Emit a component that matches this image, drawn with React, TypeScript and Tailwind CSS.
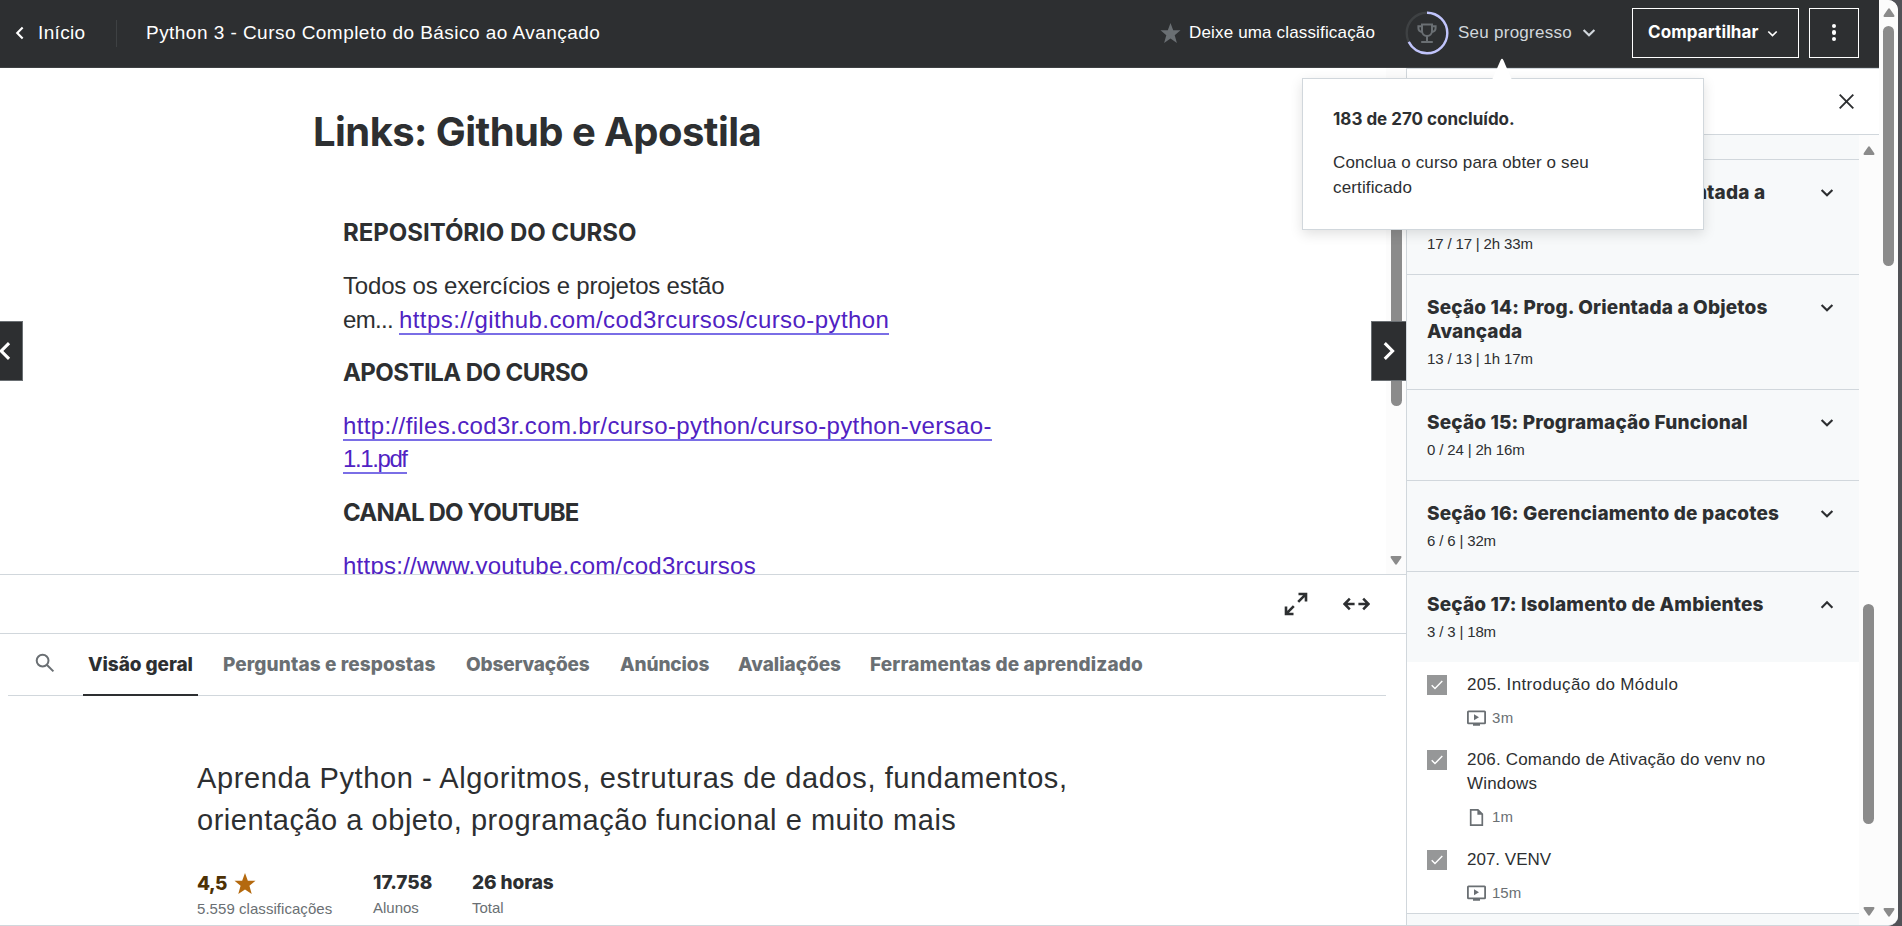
function Chevron({ className, dir = "down" }: { className: string; dir?: "down" | "up" | "left" | "right" }) {
  const paths = {
    down: "M1.2 1.7 6 6.5l4.8-4.8",
    up: "M1.2 6.8 6 2l4.8 4.8",
    left: "M6.8 1.2 2 6l4.8 4.8",
    right: "M1.7 1.2 6.5 6l-4.8 4.8",
  };
  const box = dir === "left" || dir === "right" ? "0 0 8 12" : "0 0 12 8";
  return (
    <svg viewBox={box} className={className} fill="none" stroke="currentColor" strokeWidth="1.9">
      <path d={paths[dir]} />
    </svg>
  );
}

function Star({ className }: { className: string }) {
  return (
    <svg viewBox="0 0 20 20" className={className} fill="currentColor">
      <path d="M10 0l2.7 7.3H20l-5.8 4.9L16.4 20 10 15.6 3.6 20l2.2-7.8L0 7.3h7.3z" />
    </svg>
  );
}

function ArrowTip({ up = false }: { up?: boolean }) {
  return (
    <svg viewBox="0 0 12 9" className="h-[9px] w-3 shrink-0" fill="#8b8b8b">
      <path d={up ? "M6 0.3Q6.6.3 7 1l4.3 6.2Q12 9 10.6 9H1.4Q0 9 .7 7.2L5 1Q5.4.3 6 .3z" : "M6 8.7Q6.6 8.7 7 8l4.3-6.2Q12 0 10.6 0H1.4Q0 0 .7 1.8L5 8Q5.4 8.7 6 8.7z"} />
    </svg>
  );
}

function Header() {
  return (
    <header className="flex h-[68px] shrink-0 items-center border-b border-[#3e4143] bg-[#2d2f31] text-white">
      <Chevron dir="left" className="mb-[2px] ml-[15px] h-[14px] w-[9px]" />
      <span className="ml-[14px] w-[78px] text-[19px] tracking-[0.35px]">Início</span>
      <span className="h-[27px] w-px bg-[#3e4143]" />
      <span className="ml-[29px] text-[19px] tracking-[0.46px]">Python 3 - Curso Completo do Básico ao Avançado</span>
      <div className="ml-auto flex h-full items-center pb-[2px]">
        <Star className="h-5 w-[21px] text-[#6a6f73]" />
        <span className="ml-2 w-[216px] text-[17px] tracking-[0.16px]">Deixe uma classificação</span>
        <svg viewBox="0 0 44 44" className="h-11 w-11" fill="none">
          <circle cx="22" cy="22" r="20.3" stroke="#3e4143" strokeWidth="2.4" />
          <circle cx="22" cy="22" r="20.3" stroke="#c0c4fc" strokeWidth="2.4" pathLength="270" strokeDasharray="183 270" transform="rotate(-90 22 22)" />
          <g stroke="#6a6f73" strokeWidth="2">
            <path d="M17 13.5h10v6.4a5 5 0 0 1-10 0z" />
            <path d="M17 15.3h-3.6v1.6c0 2.2 1.4 3.8 4.2 4M27 15.3h3.6v1.6c0 2.2-1.4 3.8-4.2 4M22 24.5v6.3M16.2 31h11.6" />
          </g>
        </svg>
        <span className="ml-[9px] w-[124px] text-[17px] tracking-[0.26px] text-[#d1d7dc]">Seu progresso</span>
        <Chevron className="h-[9px] w-[14px] text-[#d1d7dc]" />
        <button className="ml-[36px] flex h-[50px] w-[167px] items-center border border-white pl-[15px] font-['Inter'] text-[17px] font-bold tracking-[0.1px]">
          <span className="w-[119px] text-left">Compartilhar</span>
          <Chevron className="mt-[2px] h-[7px] w-[11px]" />
        </button>
        <button className="mr-5 ml-[10px] flex h-[50px] w-[50px] flex-col items-center justify-center gap-[2px] border border-white">
          <i className="size-[4.6px] rounded-full bg-white" />
          <i className="size-[4.6px] rounded-full bg-white" />
          <i className="size-[4.6px] rounded-full bg-white" />
        </button>
      </div>
    </header>
  );
}

function Tooltip() {
  return (
    <div className="absolute top-[78px] left-[1302px] h-[152px] w-[402px] border border-[#d1d7dc] bg-white pt-[28px] pl-[30px] shadow-[0_4px_12px_rgba(0,0,0,0.12)]">
      <svg viewBox="0 0 20 22" className="absolute top-[-21px] left-[189px] h-[22px] w-5" fill="white">
        <path d="M0 22 8.6 2.2Q10-.5 11.4 2.2L20 22z" />
      </svg>
      <p className="font-['Inter'] text-[17px] leading-6 font-bold">183 de 270 concluído.</p>
      <p className="mt-[19px] w-[280px] text-[17px] leading-[25px] tracking-[0.14px]">Conclua o curso para obter o seu certificado</p>
    </div>
  );
}

function Link({ children, className }: { children: string; className: string }) {
  return <a className={`border-b-2 border-[#7a6ee6] text-[#5022c3] ${className}`}>{children}</a>;
}

function Heading({ children, className }: { children: string; className: string }) {
  return <h2 className={`mb-5 font-['Inter'] font-bold ${className}`}>{children}</h2>;
}

function Article() {
  return (
    <div className="relative flex h-[506px] overflow-hidden">
      <article className="flex-1 pl-[343px] text-[24px] leading-[33.3px]">
        <h1 className="mt-[40px] mb-[60px] -ml-[30px] font-['Inter'] text-[40px] leading-[48px] font-bold tracking-[-0.57px]">Links: Github e Apostila</h1>
        <Heading className="tracking-[-0.03px]">REPOSITÓRIO DO CURSO</Heading>
        <p className="mb-5">
          <span className="tracking-[-0.19px]">Todos os exercícios e projetos estão</span>
          <br />
          <span className="tracking-[-0.67px]">em... </span>
          <Link className="tracking-[0.42px]">https://github.com/cod3rcursos/curso-python</Link>
        </p>
        <Heading className="tracking-[-0.55px]">APOSTILA DO CURSO</Heading>
        <p className="mb-5">
          <Link className="tracking-[0.37px]">http://files.cod3r.com.br/curso-python/curso-python-versao-</Link>
          <br />
          <Link className="tracking-[-1.4px]">1.1.pdf</Link>
        </p>
        <Heading className="tracking-[-0.82px]">CANAL DO YOUTUBE</Heading>
        <p>
          <Link className="tracking-[0.25px]">https://www.youtube.com/cod3rcursos</Link>
        </p>
      </article>
      <div className="flex w-5 flex-col items-center justify-between bg-[#fcfcfc] pb-[9px]">
        <div className="mt-[30px] h-[308px] w-[11px] rounded-full bg-[#8b8b8b]" />
        <ArrowTip />
      </div>
      <button className="absolute top-[253px] left-0 flex h-[60px] w-[23px] items-center border border-l-0 border-[#6a6f73] bg-[#2d2f31] text-white">
        <Chevron dir="left" className="-ml-[2px] h-5 w-[13px]" />
      </button>
      <button className="absolute top-[253px] right-0 flex h-[60px] w-[35px] items-center border border-r-0 border-[#6a6f73] bg-[#2d2f31] pl-[10px] text-white">
        <Chevron dir="right" className="h-5 w-[13px]" />
      </button>
    </div>
  );
}

function ControlBar() {
  return (
    <div className="flex h-[60px] shrink-0 items-center justify-end gap-[35px] border-y border-[#d1d7dc] pr-[36px] text-[#2d2f31]">
      <svg viewBox="0 0 24 24" className="h-6 w-6" fill="none" stroke="currentColor" strokeWidth="2.6">
        <path d="M14.5 2h7.5v7.5M21.4 2.6l-7.2 7.2M2 14.5V22h7.5M2.6 21.4l7.2-7.2" />
      </svg>
      <svg viewBox="0 0 27 14" className="h-[14px] w-[27px]" fill="none" stroke="currentColor" strokeWidth="2.5">
        <path d="M6.8 1.7 1.6 7l5.2 5.3M2 7h9.6M20.2 1.7 25.4 7l-5.2 5.3M25 7h-9.6" />
      </svg>
    </div>
  );
}

function Tabs() {
  const tab = "flex h-full items-center pt-px";
  return (
    <nav className="mr-5 ml-2 flex h-[62px] items-stretch border-b border-[#d1d7dc] font-['Inter'] text-[19px] font-extrabold whitespace-nowrap text-[#6a6f73]">
      <svg viewBox="0 0 20 20" className="mt-[19px] ml-[27px] h-5 w-5" fill="none" stroke="currentColor" strokeWidth="2">
        <circle cx="7.6" cy="7.6" r="5.9" />
        <path d="m12 12 6.4 6.4" />
      </svg>
      <span className="-mb-px ml-[28px] flex w-[115px] items-center border-b-2 border-[#2d2f31] pt-[2px] pl-[5px] tracking-[-0.08px] text-[#2d2f31]">Visão geral</span>
      <span className={`${tab} ml-[25px] w-[243px] tracking-[0.1px]`}>Perguntas e respostas</span>
      <span className={`${tab} w-[154px] tracking-[-0.17px]`}>Observações</span>
      <span className={`${tab} w-[118px] tracking-[-0.12px]`}>Anúncios</span>
      <span className={`${tab} w-[132px] tracking-[-0.04px]`}>Avaliações</span>
      <span className={`${tab} tracking-[0.15px]`}>Ferramentas de aprendizado</span>
    </nav>
  );
}

function Overview() {
  return (
    <section className="pt-[61px] pl-[197px]">
      <p className="text-[29px] leading-[42px]">
        <span className="tracking-[0.6px]">Aprenda Python - Algoritmos, estruturas de dados, fundamentos,</span>
        <br />
        <span className="tracking-[0.53px]">orientação a objeto, programação funcional e muito mais</span>
      </p>
      <div className="mt-[30px] flex">
        <div className="w-[176px]">
          <div className="flex h-6 items-center gap-[7px] font-['Inter'] text-[19px] font-extrabold tracking-[-0.5px] text-[#4d3105]">
            <span className="mt-[2px]">4,5</span>
            <Star className="h-[21px] w-[22px] text-[#b4690e]" />
          </div>
          <div className="mt-[3px] text-[15px] leading-[21px] tracking-[0.05px] text-[#6a6f73]">5.559 classificações</div>
        </div>
        <div className="w-[99px]">
          <div className="font-['Inter'] text-[19px] leading-6 font-extrabold">17.758</div>
          <div className="mt-[3px] text-[15px] leading-5 text-[#6a6f73]">Alunos</div>
        </div>
        <div>
          <div className="font-['Inter'] text-[19px] leading-6 font-extrabold tracking-[-0.1px]">26 horas</div>
          <div className="mt-[3px] text-[15px] leading-5 text-[#6a6f73]">Total</div>
        </div>
      </div>
    </section>
  );
}

function Section({ title, info, open = false }: { title: string; info: string; open?: boolean }) {
  return (
    <div className="flex shrink-0 justify-between border-t border-[#d1d7dc] bg-[#f7f9fa] pt-[21px] pr-[25px] pb-5 pl-5">
      <div>
        <h3 className="w-[365px] font-['Inter'] text-[19px] leading-6 font-extrabold tracking-[0.16px]">{title}</h3>
        <p className="mt-[5px] text-[15px] leading-5 tracking-[-0.15px]">{info}</p>
      </div>
      <Chevron dir={open ? "up" : "down"} className="mt-[7px] h-[9px] w-[14px]" />
    </div>
  );
}

function Lesson({ title, time, doc = false, className }: { title: string; time: string; doc?: boolean; className: string }) {
  return (
    <div className={`flex shrink-0 pl-5 ${className}`}>
      <div className="mt-[2px] flex size-5 items-center justify-center bg-[#969798]">
        <svg viewBox="0 0 12 10" className="h-[10px] w-3" fill="none" stroke="white" strokeWidth="1.4">
          <path d="M.7 5.2 4 8.6 11.3 1" />
        </svg>
      </div>
      <div className="ml-5">
        <div className="w-[320px] text-[17px] leading-6">{title}</div>
        <div className="mt-[11px] flex h-5 items-center text-[15px] text-[#6a6f73]">
          {doc ? (
            <svg viewBox="0 0 19 19" className="h-[19px] w-[19px]" fill="none" stroke="currentColor" strokeWidth="1.7">
              <path d="M3.7 1.8h7.2l4.4 4.4v11H3.7z" />
              <path d="M10.4 1.8v5h5z" fill="currentColor" stroke="none" />
            </svg>
          ) : (
            <svg viewBox="0 0 19 16" className="h-4 w-[19px]" fill="none" stroke="currentColor" strokeWidth="1.8">
              <rect x=".9" y="1.3" width="17.2" height="12" rx=".6" />
              <path d="M7 4.3v6l5-3zM6 13.8h7v2H6z" fill="currentColor" stroke="none" />
            </svg>
          )}
          <span className="ml-[6px]">{time}</span>
        </div>
      </div>
    </div>
  );
}

function Sidebar() {
  return (
    <aside className="flex w-[473px] shrink-0 flex-col border-t border-l border-[#d1d7dc]">
      <div className="flex h-[66px] shrink-0 items-center justify-end border-b border-[#d1d7dc] pr-[25px]">
        <svg viewBox="0 0 15 15" className="h-[15px] w-[15px]" fill="none" stroke="currentColor" strokeWidth="1.9">
          <path d="m.7.7 13.6 13.6M14.3.7.7 14.3" />
        </svg>
      </div>
      <div className="flex min-h-0 flex-1">
        <div className="flex w-[452px] flex-col overflow-hidden">
          <div className="h-6 shrink-0 bg-[#f7f9fa]" />
          <Section title="Seção 13: Programação Orientada a Objetos" info="17 / 17 | 2h 33m" />
          <Section title="Seção 14: Prog. Orientada a Objetos Avançada" info="13 / 13 | 1h 17m" />
          <Section title="Seção 15: Programação Funcional" info="0 / 24 | 2h 16m" />
          <Section title="Seção 16: Gerenciamento de pacotes" info="6 / 6 | 32m" />
          <Section title="Seção 17: Isolamento de Ambientes" info="3 / 3 | 18m" open />
          <Lesson className="h-[76px] pt-[11px] tracking-[0.36px]" title="205. Introdução do Módulo" time="3m" />
          <Lesson className="h-[100px] pt-[10px] tracking-[0.18px]" title="206. Comando de Ativação do venv no Windows" time="1m" doc />
          <Lesson className="h-[75px] pt-[10px]" title="207. VENV" time="15m" />
          <div className="flex-1 border-t border-[#d1d7dc] bg-[#f7f9fa]" />
        </div>
        <div className="flex flex-1 flex-col items-center bg-[#fcfcfc] pt-[11px] pr-px pb-[9px]">
          <ArrowTip up />
          <div className="mt-[449px] mb-auto h-[220px] w-[11px] rounded-full bg-[#8b8b8b]" />
          <ArrowTip />
        </div>
      </div>
    </aside>
  );
}

export default function App() {
  return (
    <div className="h-[926px] w-[1902px] overflow-hidden bg-[#515257] pr-1 font-['Liberation_Sans',sans-serif] text-[#2d2f31]">
      <div className="relative flex h-full overflow-hidden rounded-r-[10px] border-b border-[#d1d7dc] bg-white">
        <div className="flex w-[1879px] shrink-0 flex-col">
          <Header />
          <div className="flex min-h-0 flex-1">
            <main className="flex min-w-0 flex-1 flex-col">
              <Article />
              <ControlBar />
              <Tabs />
              <Overview />
            </main>
            <Sidebar />
          </div>
        </div>
        <div className="flex flex-1 flex-col items-center bg-[#fcfcfc] pt-2 pb-2">
          <ArrowTip up />
          <div className="mt-[9px] mb-auto h-[240px] w-[11px] rounded-full bg-[#8b8b8b]" />
          <ArrowTip />
        </div>
        <Tooltip />
      </div>
    </div>
  );
}
